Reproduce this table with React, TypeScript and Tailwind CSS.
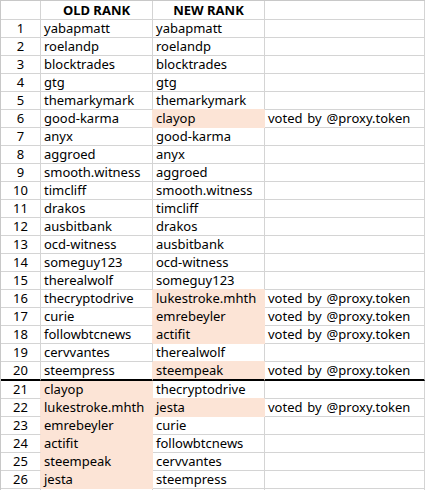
import clsx from 'clsx'

type Row = {
    n: number
    old: string
    next: string
    note?: string
    oldHl?: boolean
    newHl?: boolean
}

const rows: Row[] = [
    { n: 1, old: 'yabapmatt', next: 'yabapmatt' },
    { n: 2, old: 'roelandp', next: 'roelandp' },
    { n: 3, old: 'blocktrades', next: 'blocktrades' },
    { n: 4, old: 'gtg', next: 'gtg' },
    { n: 5, old: 'themarkymark', next: 'themarkymark' },
    { n: 6, old: 'good-karma', next: 'clayop', newHl: true, note: 'voted by @proxy.token' },
    { n: 7, old: 'anyx', next: 'good-karma' },
    { n: 8, old: 'aggroed', next: 'anyx' },
    { n: 9, old: 'smooth.witness', next: 'aggroed' },
    { n: 10, old: 'timcliff', next: 'smooth.witness' },
    { n: 11, old: 'drakos', next: 'timcliff' },
    { n: 12, old: 'ausbitbank', next: 'drakos' },
    { n: 13, old: 'ocd-witness', next: 'ausbitbank' },
    { n: 14, old: 'someguy123', next: 'ocd-witness' },
    { n: 15, old: 'therealwolf', next: 'someguy123' },
    { n: 16, old: 'thecryptodrive', next: 'lukestroke.mhth', newHl: true, note: 'voted by @proxy.token' },
    { n: 17, old: 'curie', next: 'emrebeyler', newHl: true, note: 'voted by @proxy.token' },
    { n: 18, old: 'followbtcnews', next: 'actifit', newHl: true, note: 'voted by @proxy.token' },
    { n: 19, old: 'cervvantes', next: 'therealwolf' },
    { n: 20, old: 'steempress', next: 'steempeak', newHl: true, note: 'voted by @proxy.token' },
    { n: 21, old: 'clayop', next: 'thecryptodrive', oldHl: true },
    { n: 22, old: 'lukestroke.mhth', next: 'jesta', oldHl: true, newHl: true, note: 'voted by @proxy.token' },
    { n: 23, old: 'emrebeyler', next: 'curie', oldHl: true },
    { n: 24, old: 'actifit', next: 'followbtcnews', oldHl: true },
    { n: 25, old: 'steempeak', next: 'cervvantes', oldHl: true },
    { n: 26, old: 'jesta', next: 'steempress', oldHl: true },
]

function Cell({
    children,
    width,
    fill,
    rightFill,
    bottomFill,
    center,
    bold,
    thick,
}: {
    children?: React.ReactNode
    width: string
    fill?: boolean
    rightFill?: boolean
    bottomFill?: boolean
    center?: boolean
    bold?: boolean
    thick?: boolean
}) {
    return (
        <div
            className={clsx(
                'shrink-0 border-r flex items-center px-[3px] whitespace-nowrap overflow-hidden',
                width,
                fill ? 'bg-[#fce4d6]' : 'bg-white',
                fill || rightFill ? 'border-r-[#fce4d6]' : 'border-r-[#d4d4d4]',
                thick
                    ? 'border-b-2 border-b-black'
                    : clsx('border-b', fill || bottomFill ? 'border-b-[#fce4d6]' : 'border-b-[#d4d4d4]'),
                center && 'justify-center',
                bold && 'font-bold'
            )}
        >
            {children}
        </div>
    )
}

export default function App() {
    return (
        <div
            className="w-[426px] h-[490px] overflow-hidden bg-white text-black text-[13px] leading-none"
            style={{ fontFamily: '"Noto Sans", "Liberation Sans", sans-serif' }}
        >
            <div className="w-[425px] border-l border-t border-[#c8c8c8]">
                {/* header */}
                <div className="flex h-[19px]">
                    <Cell width="w-[40px]" />
                    <Cell width="w-[112px]" center bold>OLD RANK</Cell>
                    <Cell width="w-[112px]" center bold>NEW RANK</Cell>
                    <Cell width="w-[160px]" />
                </div>

                {rows.map((r, i) => {
                    const below = rows[i + 1]
                    const thick = r.n === 20
                    return (
                        <div key={r.n} className={clsx('flex', thick ? 'h-[19px]' : 'h-[18px]')}>
                            <Cell
                                width="w-[40px]"
                                center
                                rightFill={r.oldHl}
                                thick={thick}
                            >
                                {r.n}
                            </Cell>
                            <Cell
                                width="w-[112px]"
                                fill={r.oldHl}
                                rightFill={r.newHl}
                                bottomFill={below?.oldHl}
                                thick={thick}
                            >
                                {r.old}
                            </Cell>
                            <Cell
                                width="w-[112px]"
                                fill={r.newHl}
                                bottomFill={below?.newHl}
                                thick={thick}
                            >
                                {r.next}
                            </Cell>
                            <Cell width="w-[160px]" thick={thick}>
                                {r.note && <span className="[word-spacing:1.5px]">{r.note}</span>}
                            </Cell>
                        </div>
                    )
                })}

                {/* empty row peeking at the bottom */}
                <div className="flex h-[18px]">
                    <Cell width="w-[40px]" />
                    <Cell width="w-[112px]" />
                    <Cell width="w-[112px]" />
                    <Cell width="w-[160px]" />
                </div>
            </div>
        </div>
    )
}
